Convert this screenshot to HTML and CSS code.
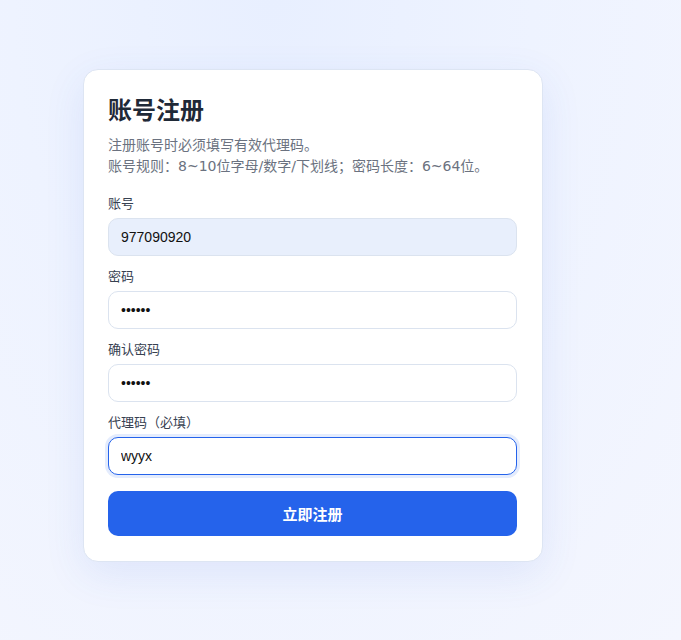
FILE: index.html
```html
<!DOCTYPE html>
<html lang="zh-CN">
<head>
<meta charset="utf-8">
<title>账号注册</title>
<link rel="stylesheet" href="styles.css">
</head>
<body>
<main class="page">
  <form class="card">
    <h1 class="title">账号注册</h1>
    <p class="desc">注册账号时必须填写有效代理码。<br>账号规则：8~10位字母/数字/下划线；密码长度：6~64位。</p>
    <div class="field">
      <label class="label">账号</label>
      <input class="input autofill" type="text" value="977090920">
    </div>
    <div class="field">
      <label class="label">密码</label>
      <input class="input" type="password" value="123456">
    </div>
    <div class="field">
      <label class="label">确认密码</label>
      <input class="input" type="password" value="123456">
    </div>
    <div class="field">
      <label class="label">代理码（必填）</label>
      <input class="input focused" type="text" value="wyyx" autofocus>
    </div>
    <button class="submit" type="button">立即注册</button>
  </form>
</main>
</body>
</html>
```

FILE: styles.css
```css
html, body {
  margin: 0;
  padding: 0;
  height: 100%;
}
body {
  font-family: "Liberation Sans", "Noto Sans CJK SC", sans-serif;
  background: radial-gradient(ellipse at 40% 0%, #e8efff 0%, #eef3ff 45%, #f4f6fe 100%);
  color: #1f2937;
}
.page {
  padding: 69px 0 0 83px;
}
.card {
  box-sizing: border-box;
  width: 460px;
  background: #fff;
  border: 1px solid #dde5f3;
  border-radius: 15px;
  padding: 23px 25px 25px 24px;
  box-shadow: 0 12px 40px rgba(60, 100, 220, 0.10);
  display: flex;
  flex-direction: column;
}
.title {
  margin: 0;
  font-family: "Noto Sans CJK SC", sans-serif;
  font-size: 24px;
  line-height: 32px;
  font-weight: 700;
  color: #1f2937;
}
.desc {
  margin: 10px 0 0;
  font-family: "DejaVu Sans", "Noto Sans CJK SC", sans-serif;
  font-size: 14px;
  line-height: 21px;
  color: #6b7280;
}
.field {
  display: flex;
  flex-direction: column;
  margin-top: 12px;
}
.desc + .field {
  margin-top: 18px;
}
.label {
  font-size: 13px;
  line-height: 17px;
  color: #374151;
  margin-bottom: 6px;
}
.input {
  box-sizing: border-box;
  height: 38px;
  width: 100%;
  border: 1px solid #dbe3ef;
  border-radius: 10px;
  padding: 0 12px;
  font-family: "Liberation Sans", sans-serif;
  font-size: 14px;
  color: #111;
  background: #fff;
  outline: none;
}
.input.autofill {
  background: #e8effc;
}
.input.focused {
  border-color: #2563eb;
  box-shadow: 0 0 0 3px rgba(37, 99, 235, 0.12);
}
.submit {
  margin-top: 16px;
  height: 45px;
  border: none;
  border-radius: 10px;
  background: #2563eb;
  color: #fff;
  font-family: "Noto Sans CJK SC", sans-serif;
  font-size: 15px;
  font-weight: 700;
}
```
